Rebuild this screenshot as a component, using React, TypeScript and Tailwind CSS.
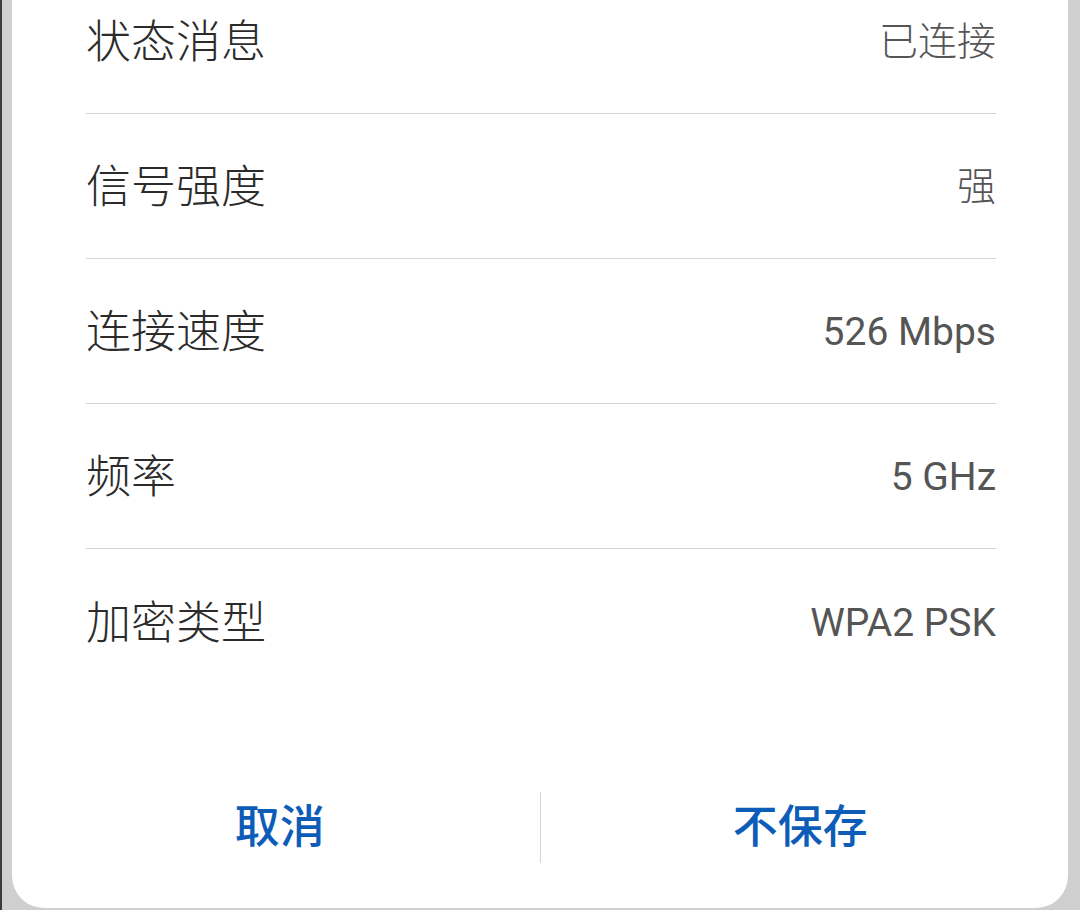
const rows = [
  { label: "状态消息", value: "已连接", cjk: true },
  { label: "信号强度", value: "强", cjk: true },
  { label: "连接速度", value: "526 Mbps", cjk: false },
  { label: "频率", value: "5 GHz", cjk: false },
  { label: "加密类型", value: "WPA2 PSK", cjk: false },
];

const font = "font-['Roboto','Noto_Sans_CJK_SC',sans-serif]";

export default function App() {
  return (
    <div className={`flex h-[910px] w-[1080px] overflow-hidden bg-[#cfcfcf] ${font}`}>
      <div className="w-[2px] bg-[#3a3a3a]" />
      <div className="flex-1 pb-[2px] pl-[10px] pr-[12px]">
        <div className="flex h-full flex-col overflow-hidden rounded-b-[32px] bg-white">
          <div className="-mt-[31px] pl-[74px] pr-[72px]">
            {rows.map((row, i) => (
              <div
                key={row.label}
                className={`flex h-[145px] items-center justify-between pt-[3px] ${
                  i < rows.length - 1 ? "border-b border-[#d4d4d4]" : ""
                }`}
              >
                <span className="text-[45px] font-light leading-none text-[#2b2b2b]">{row.label}</span>
                <span
                  className={`text-[39px] leading-none text-[#555555] ${
                    row.cjk ? "font-light" : "font-normal"
                  }`}
                >
                  {row.value}
                </span>
              </div>
            ))}
          </div>

          <div className="mb-[14px] mt-auto flex h-[134px] items-center px-[8px]">
            <button className="flex flex-1 items-center justify-center text-[45px] font-medium leading-none text-[#0d5db8]">
              取消
            </button>
            <div className="h-[71px] w-px bg-[#d4d4d4]" />
            <button className="flex flex-1 items-center justify-center text-[45px] font-medium leading-none text-[#0d5db8]">
              不保存
            </button>
          </div>
        </div>
      </div>
    </div>
  );
}
